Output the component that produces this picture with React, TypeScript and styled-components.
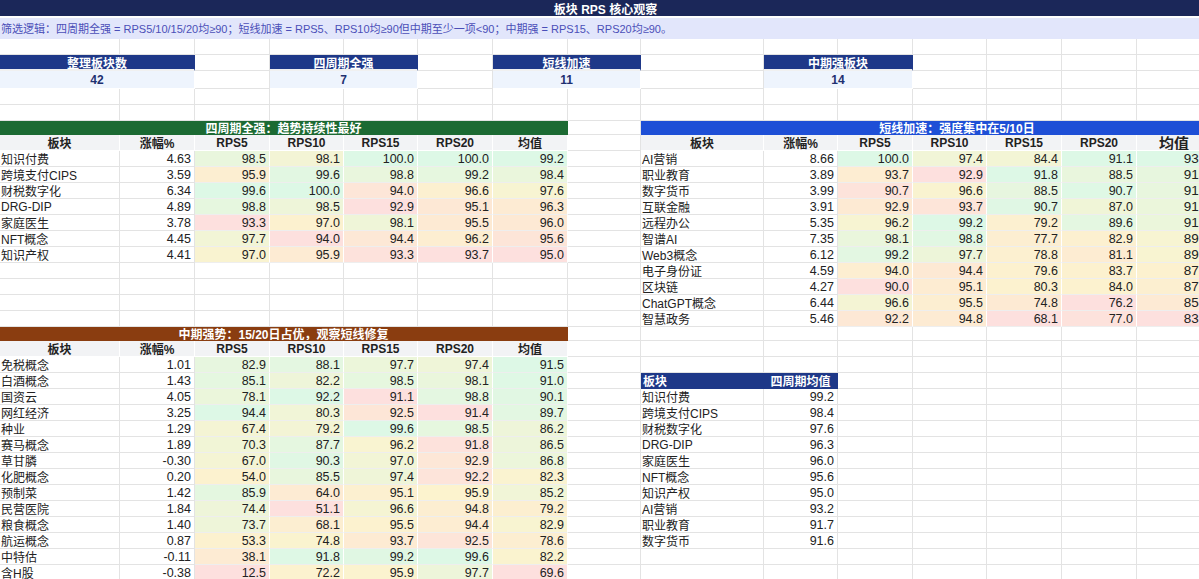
import React from "react";
import styled, { createGlobalStyle, css } from "styled-components";

const Global = createGlobalStyle`
  html, body { margin: 0; padding: 0; background: #fff; overflow: hidden; }
  body { font-family: "Liberation Sans", Arial, "Noto Sans CJK SC", sans-serif; }
`;

const COLS = [120, 75, 75, 74, 74, 75, 75, 73, 123, 74, 75, 74, 75, 75, 75, 62];
const ROWS = [18, 21, 16, 16, 18, 16, 16, 14, 16, ...Array(11).fill(16), 14, 16, ...Array(14).fill(16)];

type Kind =
  | "empty" | "title" | "filter" | "kpiHead" | "kpiVal" | "green" | "blue" | "brown"
  | "colHead" | "colHeadBig" | "name" | "num" | "heat" | "heatBig" | "smallHead" | "smallHeadL";

const Sheet = styled.div`
  display: grid;
  grid-template-columns: ${COLS.map((c) => c + "px").join(" ")};
  grid-template-rows: ${ROWS.map((r) => r + "px").join(" ")};
  width: 1199px;
`;

const dark = css`
  color: #fff;
  font-weight: bold;
  font-size: 12px;
  text-align: center;
  border-color: transparent;
`;

const Cell = styled.div<{ $kind: Kind; $span: number; $bg?: string }>`
  grid-column: span ${(p) => p.$span};
  box-sizing: border-box;
  border-right: 1px solid #e3e3e3;
  border-bottom: 1px solid #e3e3e3;
  font-size: 12.5px;
  color: #222;
  white-space: nowrap;
  overflow: hidden;
  display: flex;
  align-items: center;
  padding: 0 3px;
  background: ${(p) => p.$bg || "#fff"};
  ${(p) => {
    switch (p.$kind) {
      case "title":
        return css`${dark}; background: #1b2759; justify-content: center; border-bottom: 2px solid #fff;`;
      case "filter":
        return css`background: #e2e6fb; color: #4b4fb8; font-size: 11px; padding-left: 1px; border-color: transparent;`;
      case "kpiHead":
        return css`${dark}; background: #1e3888; justify-content: center; border-bottom: 2px solid #f0f0f0;`;
      case "kpiVal":
        return css`background: #eef4fd; color: #1e3070; font-weight: bold; font-size: 12px; justify-content: center; border-color: #fff;`;
      case "green":
        return css`${dark}; background: #1c6a33; justify-content: center;`;
      case "blue":
        return css`${dark}; background: #1e4fd6; justify-content: center;`;
      case "brown":
        return css`${dark}; background: #8a3d10; justify-content: center;`;
      case "colHead":
        return css`background: #f2f3f5; font-weight: bold; font-size: 12px; justify-content: center; border-color: #fff;`;
      case "colHeadBig":
        return css`background: #f2f3f5; font-weight: bold; font-size: 15px; justify-content: center; border-color: #fff;`;
      case "smallHead":
        return css`${dark}; background: #1e3888; justify-content: center; text-align: center;`;
      case "smallHeadL":
        return css`${dark}; background: #1e3888; justify-content: flex-start; padding-left: 2px;`;
      case "name":
        return css`padding-left: 1px; font-size: 12px;`;
      case "num":
        return css`justify-content: flex-end;`;
      case "heat":
        return css`justify-content: flex-end; border-color: #fff; border-bottom-color: #eeeeee;`;
      case "heatBig":
        return css`justify-content: flex-end; font-size: 13.5px; padding-right: 1px; border-color: #fff; border-bottom-color: #eeeeee;`;
      default:
        return "";
    }
  }}
`;

type Row = [string, number, number, number, number, number, number];

const T1: Row[] = [
  ["知识付费", 4.63, 98.5, 98.1, 100.0, 100.0, 99.2],
  ["跨境支付CIPS", 3.59, 95.9, 99.6, 98.8, 99.2, 98.4],
  ["财税数字化", 6.34, 99.6, 100.0, 94.0, 96.6, 97.6],
  ["DRG-DIP", 4.89, 98.8, 98.5, 92.9, 95.1, 96.3],
  ["家庭医生", 3.78, 93.3, 97.0, 98.1, 95.5, 96.0],
  ["NFT概念", 4.45, 97.7, 94.0, 94.4, 96.2, 95.6],
  ["知识产权", 4.41, 97.0, 95.9, 93.3, 93.7, 95.0],
];
const T2: Row[] = [
  ["AI营销", 8.66, 100.0, 97.4, 84.4, 91.1, 93.2],
  ["职业教育", 3.89, 93.7, 92.9, 91.8, 88.5, 91.7],
  ["数字货币", 3.99, 90.7, 96.6, 88.5, 90.7, 91.6],
  ["互联金融", 3.91, 92.9, 93.7, 90.7, 87.0, 91.1],
  ["远程办公", 5.35, 96.2, 99.2, 79.2, 89.6, 91.1],
  ["智谱AI", 7.35, 98.1, 98.8, 77.7, 82.9, 89.4],
  ["Web3概念", 6.12, 99.2, 97.7, 78.8, 81.1, 89.2],
  ["电子身份证", 4.59, 94.0, 94.4, 79.6, 83.7, 87.9],
  ["区块链", 4.27, 90.0, 95.1, 80.3, 84.0, 87.4],
  ["ChatGPT概念", 6.44, 96.6, 95.5, 74.8, 76.2, 85.8],
  ["智慧政务", 5.46, 92.2, 94.8, 68.1, 77.0, 83.0],
];
const T3: Row[] = [
  ["免税概念", 1.01, 82.9, 88.1, 97.7, 97.4, 91.5],
  ["白酒概念", 1.43, 85.1, 82.2, 98.5, 98.1, 91.0],
  ["国资云", 4.05, 78.1, 92.2, 91.1, 98.8, 90.1],
  ["网红经济", 3.25, 94.4, 80.3, 92.5, 91.4, 89.7],
  ["种业", 1.29, 67.4, 79.2, 99.6, 98.5, 86.2],
  ["赛马概念", 1.89, 70.3, 87.7, 96.2, 91.8, 86.5],
  ["草甘膦", -0.3, 67.0, 90.3, 97.0, 92.9, 86.8],
  ["化肥概念", 0.2, 54.0, 85.5, 97.4, 92.2, 82.3],
  ["预制菜", 1.42, 85.9, 64.0, 95.1, 95.9, 85.2],
  ["民营医院", 1.84, 74.4, 51.1, 96.6, 94.8, 79.2],
  ["粮食概念", 1.4, 73.7, 68.1, 95.5, 94.4, 82.9],
  ["航运概念", 0.87, 53.3, 74.8, 93.7, 92.5, 78.6],
  ["中特估", -0.11, 38.1, 91.8, 99.2, 99.6, 82.2],
  ["含H股", -0.38, 12.5, 72.2, 95.9, 97.7, 69.6],
];
const SMALL: [string, number][] = [...T1, ...T2.slice(0, 3)].map((r) => [r[0], r[6]]);

const RED = [253, 224, 222];
const PEACH = [253, 233, 212];
const YEL = [252, 243, 206];
const GRN = [221, 248, 230];
const mix = (a: number[], b: number[], t: number) =>
  `rgb(${a.map((v, i) => Math.round(v + (b[i] - v) * t)).join(",")})`;
function heatColor(v: number, col: number[]) {
  const min = Math.min(...col);
  const max = Math.max(...col);
  const t = max === min ? 1 : (v - min) / (max - min);
  if (t < 0.25) return mix(RED, PEACH, t * 4);
  if (t < 0.55) return mix(PEACH, YEL, (t - 0.25) / 0.3);
  return mix(YEL, GRN, (t - 0.55) / 0.45);
}

type CellDef = { kind: Kind; span: number; text?: string; bg?: string };

function buildGrid() {
  const nR = ROWS.length;
  const nC = COLS.length;
  const map = new Map<string, CellDef>();
  const covered = new Set<string>();
  const put = (r: number, c: number, def: CellDef) => {
    map.set(`${r},${c}`, def);
    for (let k = 1; k < def.span; k++) covered.add(`${r},${c + k}`);
  };

  put(0, 0, { kind: "title", span: 15, text: "板块 RPS 核心观察" });
  put(1, 0, {
    kind: "filter",
    span: 15,
    text: "筛选逻辑：四周期全强 = RPS5/10/15/20均≥90；短线加速 = RPS5、RPS10均≥90但中期至少一项<90；中期强 = RPS15、RPS20均≥90。",
  });
  const kpis: [number, string, string][] = [
    [0, "整理板块数", "42"],
    [3, "四周期全强", "7"],
    [6, "短线加速", "11"],
    [9, "中期强板块", "14"],
  ];
  kpis.forEach(([c, h, v]) => {
    put(3, c, { kind: "kpiHead", span: 2, text: h });
    put(4, c, { kind: "kpiVal", span: 2, text: v });
  });

  const table = (rTitle: number, c0: number, kind: Kind, title: string, rows: Row[], span: number, big: boolean) => {
    put(rTitle, c0, { kind, span, text: title });
    const heads = ["板块", "涨幅%", "RPS5", "RPS10", "RPS15", "RPS20", "均值"];
    heads.forEach((h, i) =>
      put(rTitle + 1, c0 + i, { kind: big && i === 6 ? "colHeadBig" : "colHead", span: 1, text: h })
    );
    const cols = [2, 3, 4, 5, 6].map((i) => rows.map((r) => r[i] as number));
    rows.forEach((row, ri) => {
      const r = rTitle + 2 + ri;
      put(r, c0, { kind: "name", span: 1, text: row[0] });
      put(r, c0 + 1, { kind: "num", span: 1, text: (row[1] as number).toFixed(2) });
      for (let i = 2; i <= 6; i++) {
        const v = row[i] as number;
        put(r, c0 + i, {
          kind: big && i === 6 ? "heatBig" : "heat",
          span: 1,
          text: v.toFixed(1),
          bg: heatColor(v, cols[i - 2]),
        });
      }
    });
  };
  table(7, 0, "green", "四周期全强：趋势持续性最好", T1, 7, false);
  table(7, 8, "blue", "短线加速：强度集中在5/10日", T2, 8, true);
  table(20, 0, "brown", "中期强势：15/20日占优，观察短线修复", T3, 7, false);

  put(23, 8, { kind: "smallHeadL", span: 1, text: "板块" });
  put(23, 9, { kind: "smallHead", span: 1, text: "四周期均值" });
  SMALL.forEach(([n, v], i) => {
    put(24 + i, 8, { kind: "name", span: 1, text: n });
    put(24 + i, 9, { kind: "num", span: 1, text: v.toFixed(1) });
  });

  const out: (CellDef & { key: string })[] = [];
  for (let r = 0; r < nR; r++) {
    for (let c = 0; c < nC; c++) {
      const k = `${r},${c}`;
      if (covered.has(k)) continue;
      const d = map.get(k) || { kind: "empty" as Kind, span: 1 };
      out.push({ ...d, key: k });
    }
  }
  return out;
}

export default function App() {
  const cells = buildGrid();
  return (
    <>
      <Global />
      <Sheet>
        {cells.map((c) => (
          <Cell key={c.key} $kind={c.kind} $span={c.span} $bg={c.bg}>
            {c.text}
          </Cell>
        ))}
      </Sheet>
    </>
  );
}
